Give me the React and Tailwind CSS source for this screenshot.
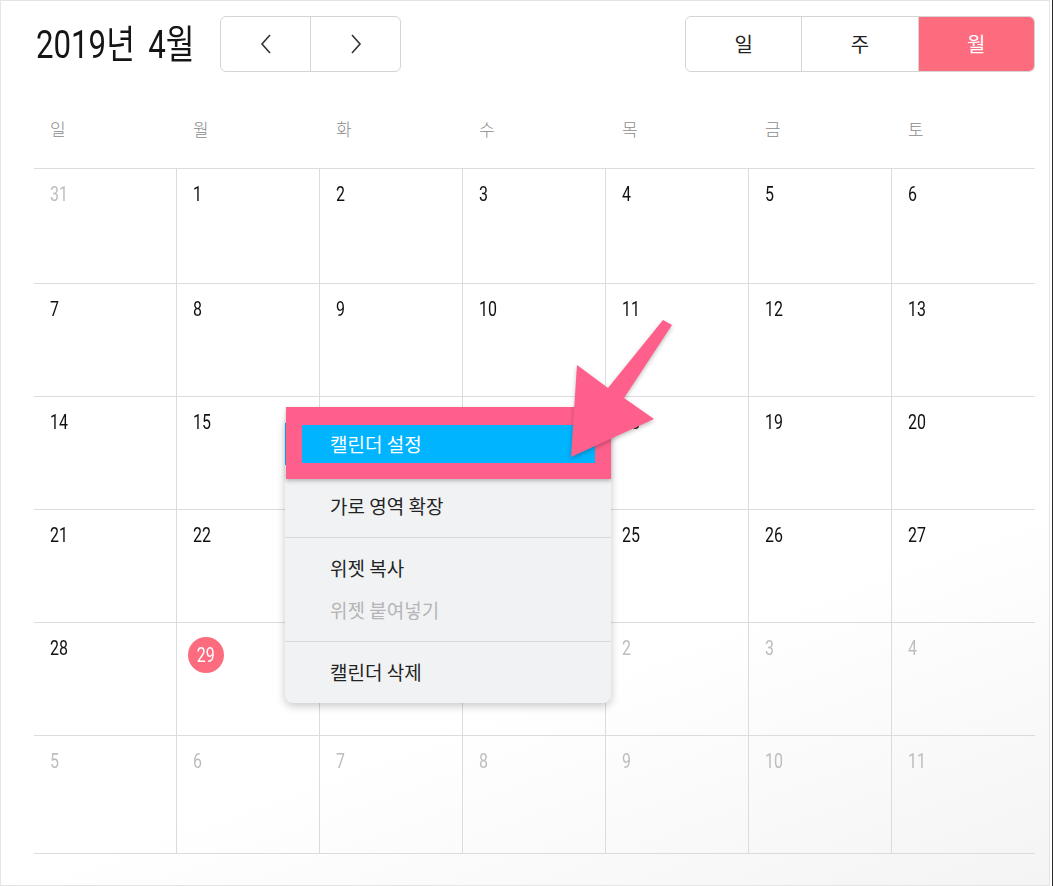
import React from 'react';

const NUM_FONT = "Roboto, 'Noto Sans CJK KR', sans-serif";
const KR_FONT = "'Noto Sans CJK KR', 'Noto Sans', sans-serif";

const weekdays = ['일', '월', '화', '수', '목', '금', '토'];

// [day, inMonth]
const weeks = [
  [[31, false], [1, true], [2, true], [3, true], [4, true], [5, true], [6, true]],
  [[7, true], [8, true], [9, true], [10, true], [11, true], [12, true], [13, true]],
  [[14, true], [15, true], [16, true], [17, true], [18, true], [19, true], [20, true]],
  [[21, true], [22, true], [23, true], [24, true], [25, true], [26, true], [27, true]],
  [[28, true], [29, true], [30, true], [1, false], [2, false], [3, false], [4, false]],
  [[5, false], [6, false], [7, false], [8, false], [9, false], [10, false], [11, false]],
];

const rowHeights = ['h-[115px]', 'h-[113px]', 'h-[113px]', 'h-[113px]', 'h-[113px]', 'h-[118px]'];

// narrow, tall digits like the original condensed face
function Narrow({ children, className = '' }) {
  return (
    <span className={`inline-block whitespace-nowrap ${className}`} style={{ fontFamily: NUM_FONT }}>
      {children}
    </span>
  );
}

function DayCell({ day, inMonth, today, last, height }) {
  return (
    <div className={`${height} border-b border-[#dcdcdc] ${last ? '' : 'border-r'}`}>
      {today ? (
        <div className="ml-[11px] mt-[14px] w-[36px] h-[36px] rounded-full bg-[#fd6b7f] flex items-center justify-center text-white text-[21px] leading-none">
          <Narrow className="origin-center scale-x-[0.76]">{day}</Narrow>
        </div>
      ) : (
        <div className={`pl-[16px] pt-[12px] text-[21px] leading-[24px] ${inMonth ? 'text-[#111]' : 'text-[#bdbdbd]'}`}>
          <Narrow className="origin-left scale-x-[0.76]">{day}</Narrow>
        </div>
      )}
    </div>
  );
}

function MenuItem({ children, active, disabled }) {
  return (
    <div
      className={`h-[42px] flex items-center pl-[45px] text-[19px] ${active ? 'bg-[#00b4ff] text-white' : disabled ? 'text-[#b5b5b5]' : 'text-[#222]'}`}
    >
      {children}
    </div>
  );
}

function Separator() {
  return <div className="h-px bg-[#d9d9db] mt-[10px] mb-[9px]" />;
}

export default function App() {
  return (
    <div className="w-[1054px] h-[886px] bg-white flex overflow-hidden">
      <div className="relative w-[1050px] h-[886px] border border-[#e4e4e4] pl-[33px] pr-[14px] bg-[linear-gradient(160deg,#ffffff_70%,#f4f4f4_100%)]">
        {/* header */}
        <div className="flex items-center h-[56px] mt-[15px]">
          <div className="w-[186px] pl-[2px] text-[39px] leading-[56px] text-[#151515]">
            <Narrow className="origin-left scale-x-[0.8] [word-spacing:7px]">2019년 4월</Narrow>
          </div>
          <div className="flex h-[56px] w-[181px] border border-[#d5d5d5] rounded-[6px] bg-white">
            <button className="flex-1 flex items-center justify-center border-r border-[#d5d5d5]">
              <svg width="14" height="22" viewBox="0 0 14 22" fill="none" stroke="#333" strokeWidth="1.6">
                <polyline points="11,2 3,11 11,20" />
              </svg>
            </button>
            <button className="flex-1 flex items-center justify-center">
              <svg width="14" height="22" viewBox="0 0 14 22" fill="none" stroke="#333" strokeWidth="1.6">
                <polyline points="3,2 11,11 3,20" />
              </svg>
            </button>
          </div>
          <div className="ml-auto flex h-[56px] w-[350px] border border-[#d5d5d5] rounded-[6px] overflow-hidden text-[20px]" style={{ fontFamily: KR_FONT }}>
            <div className="flex-1 flex items-center justify-center border-r border-[#d5d5d5] text-[#222]">일</div>
            <div className="flex-1 flex items-center justify-center border-r border-[#d5d5d5] text-[#222]">주</div>
            <div className="flex-1 flex items-center justify-center bg-[#fd6b7f] text-white">월</div>
          </div>
        </div>

        {/* weekday labels */}
        <div className="grid grid-cols-7 h-[97px] pt-[44px] border-b border-[#dcdcdc]" style={{ fontFamily: KR_FONT }}>
          {weekdays.map(w => (
            <div key={w} className="pl-[16px] text-[17px] leading-[26px] text-[#8c8c8c] font-light">{w}</div>
          ))}
        </div>

        {/* days */}
        <div className="grid grid-cols-7">
          {weeks.map((week, wi) =>
            week.map(([d, inMonth], di) => (
              <DayCell
                key={`${wi}-${di}`}
                day={d}
                inMonth={inMonth}
                today={wi === 4 && di === 1}
                last={di === 6}
                height={rowHeights[wi]}
              />
            ))
          )}
        </div>

        {/* context menu */}
        <div
          className="absolute left-[284px] top-[416px] w-[326px] bg-[#f1f2f4] rounded-[8px] pt-[6px] pb-[10px] shadow-[0_3px_10px_rgba(0,0,0,0.22)]"
          style={{ fontFamily: KR_FONT }}
        >
          <MenuItem active>캘린더 설정</MenuItem>
          <Separator />
          <MenuItem>가로 영역 확장</MenuItem>
          <Separator />
          <MenuItem>위젯 복사</MenuItem>
          <MenuItem disabled>위젯 붙여넣기</MenuItem>
          <Separator />
          <MenuItem>캘린더 삭제</MenuItem>
        </div>

        {/* annotation frame */}
        <div className="absolute left-[285px] top-[406px] w-[325px] h-[72px] border-[#fe5f8b] border-l-[16px] border-r-[16px] border-t-[18px] border-b-[16px] shadow-[0_2px_4px_rgba(0,0,0,0.25)]" />

        {/* annotation arrow */}
        <svg className="absolute left-[554px] top-[300px] pointer-events-none" width="130" height="170" viewBox="554 300 130 170" style={{ filter: 'drop-shadow(0 2px 2px rgba(0,0,0,0.25))' }}>
          <polygon
            points="662,319 671,324 623,397 653,418 570,456 576,364 607,387"
            fill="#fe5f8b"
          />
        </svg>
      </div>
      <div className="w-[2px]" />
      <div className="w-px h-full bg-[#2a2a2a]" />
    </div>
  );
}
